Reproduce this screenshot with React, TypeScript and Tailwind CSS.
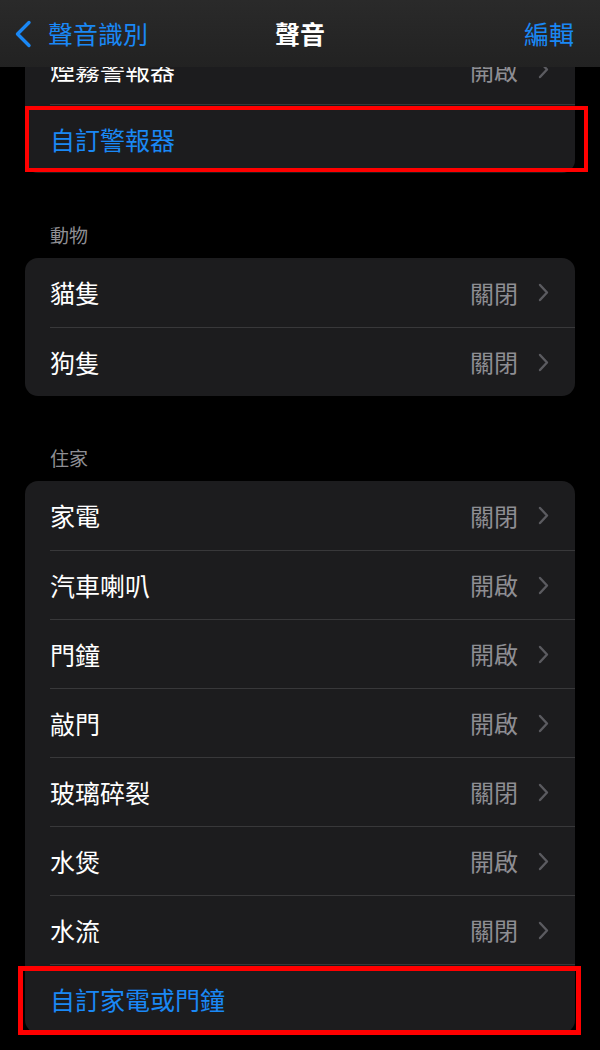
const font = { fontFamily: '"Noto Sans CJK TC", "Noto Sans", sans-serif' }

type Row = { label: string; value?: string; link?: boolean }

const alertRows: Row[] = [
  { label: "煙霧警報器", value: "開啟" },
  { label: "自訂警報器", link: true },
]

const animalRows: Row[] = [
  { label: "貓隻", value: "關閉" },
  { label: "狗隻", value: "關閉" },
]

const homeRows: Row[] = [
  { label: "家電", value: "關閉" },
  { label: "汽車喇叭", value: "開啟" },
  { label: "門鐘", value: "開啟" },
  { label: "敲門", value: "開啟" },
  { label: "玻璃碎裂", value: "關閉" },
  { label: "水煲", value: "開啟" },
  { label: "水流", value: "關閉" },
  { label: "自訂家電或門鐘", link: true },
]

function Chevron() {
  return (
    <svg width="11" height="19" viewBox="0 0 11 19" fill="none" className="ml-[20px]">
      <path d="M2 2l7 7.5L2 17" stroke="#5b5b60" strokeWidth="2.4" strokeLinecap="round" strokeLinejoin="round" />
    </svg>
  )
}

function Card({ rows }: { rows: Row[] }) {
  return (
    <div className="mx-[25px] rounded-[13px] bg-[#1c1c1e] overflow-hidden">
      {rows.map((row, i) => (
        <div key={row.label} className="pl-[25px]">
          <div
            className={`flex items-center h-[69px] pr-[26px] ${i > 0 ? "border-t border-[#38383a]" : ""}`}
          >
            <span className={`flex-1 text-[25px] leading-none ${row.link ? "text-[#1a88f5]" : "text-white"}`}>
              {row.label}
            </span>
            {row.value && (
              <>
                <span className="text-[24px] leading-none text-[#8e8e93]">{row.value}</span>
                <Chevron />
              </>
            )}
          </div>
        </div>
      ))}
    </div>
  )
}

function SectionLabel({ children }: { children: string }) {
  return (
    <div className="pl-[50px] pt-[50px] pb-[11px] text-[19px] leading-[24px] text-[#8e8e93]">{children}</div>
  )
}

export default function App() {
  return (
    <div className="relative w-[600px] h-[1050px] bg-black overflow-hidden" style={font}>
      {/* List content */}
      <div className="pt-[35px]">
        <Card rows={alertRows} />
        <SectionLabel>動物</SectionLabel>
        <Card rows={animalRows} />
        <SectionLabel>住家</SectionLabel>
        <Card rows={homeRows} />
      </div>

      {/* Navigation bar */}
      <div className="absolute top-0 left-0 right-0 h-[67px] bg-gradient-to-b from-[#2a2a2a] to-[#222222] flex items-center px-[14px]">
        <div className="flex items-center flex-1">
          <svg width="18" height="28" viewBox="0 0 18 28" fill="none">
            <path d="M15 2.5L3.5 14 15 25.5" stroke="#1a88f5" strokeWidth="3.4" strokeLinecap="round" strokeLinejoin="round" />
          </svg>
          <span className="ml-[16px] text-[25px] leading-none text-[#1a88f5]">聲音識別</span>
        </div>
        <span className="absolute left-1/2 -translate-x-1/2 text-[25px] leading-none font-bold text-white">聲音</span>
        <span className="mr-[12px] text-[25px] leading-none text-[#1a88f5]">編輯</span>
      </div>

      {/* Annotation boxes */}
      <div className="absolute left-[25px] top-[106px] w-[563px] h-[66px] border-[4px] border-[#ff0000]" />
      <div className="absolute left-[18px] top-[966px] w-[563px] h-[69px] border-[5px] border-[#ff0000]" />
    </div>
  )
}
